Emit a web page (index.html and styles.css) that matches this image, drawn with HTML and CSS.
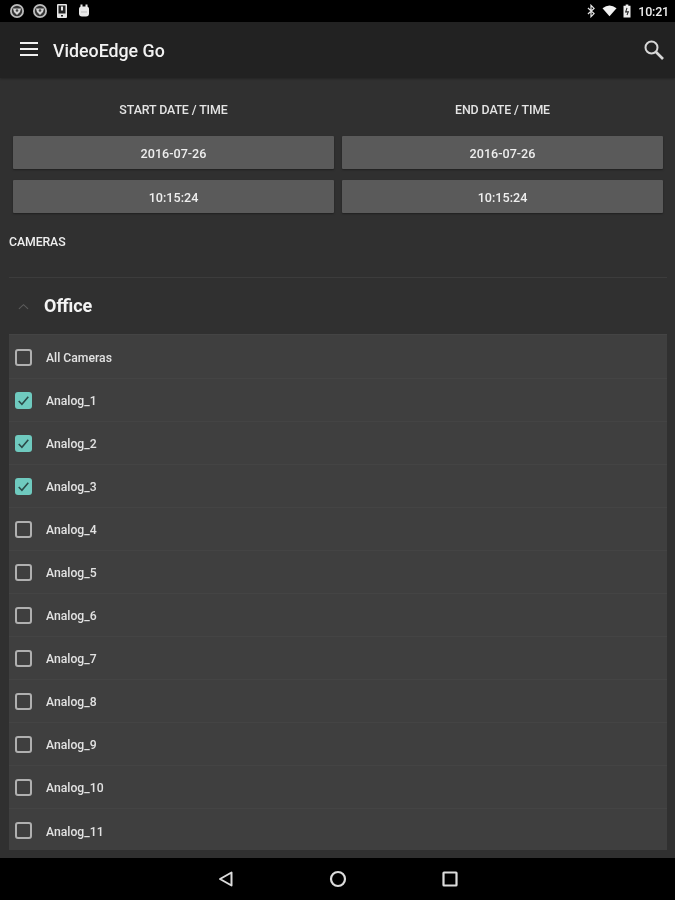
FILE: index.html
```html
<!DOCTYPE html>
<html lang="en">
<head>
<meta charset="utf-8">
<title>VideoEdge Go</title>
<link rel="stylesheet" href="styles.css">
</head>
<body>
<div class="app">
  <header class="status">
    <div class="status-group left">
      <svg class="si" viewBox="0 0 16 16"><circle cx="8" cy="8" r="7" fill="#bdbdbd"/><circle cx="8" cy="8" r="5.200" fill="#333"/><path d="M4 5.500h8l-1 3.500L8 12 5 9z" fill="#d4d4d4"/><circle cx="8" cy="7.500" r="1.300" fill="#444"/></svg>
      <svg class="si" viewBox="0 0 16 16"><circle cx="8" cy="8" r="7" fill="#bdbdbd"/><circle cx="8" cy="8" r="5.200" fill="#333"/><path d="M4 5.500h8l-1 3.500L8 12 5 9z" fill="#d4d4d4"/><circle cx="8" cy="7.500" r="1.300" fill="#444"/></svg>
      <svg class="si narrow" viewBox="0 0 12 16"><rect x="1" y="1" width="10" height="14" rx="1" fill="#e6e6e6"/><rect x="2.500" y="2.500" width="7" height="8" fill="#222"/><rect x="5" y="3.500" width="2" height="4" fill="#e6e6e6"/><rect x="5" y="12" width="2" height="1.500" fill="#222"/></svg>
      <svg class="si" viewBox="0 0 16 16"><path d="M3 6Q3 3.500 5.500 3.500h5Q13 3.500 13 6v4.500q0 3-3 3H6q-3 0-3-3z" fill="#e8e8e8"/><rect x="4.500" y="1.500" width="2" height="3" fill="#e8e8e8"/><rect x="9.500" y="1.500" width="2" height="3" fill="#e8e8e8"/><path d="M5 9h6" stroke="#bbb" stroke-width="1"/></svg>
    </div>
    <div class="status-group right">
      <svg class="si bt" viewBox="0 0 10 16"><path d="M1.500 4.500l7 6.500L5 14.500v-13L8.500 5l-7 6.500" fill="none" stroke="#e6e6e6" stroke-width="1.400"/></svg>
      <svg class="si wifi" viewBox="0 0 16 12"><path d="M0.500 3Q8-2.500 15.500 3L8 11.500z" fill="#f2f2f2"/></svg>
      <svg class="si batt" viewBox="0 0 10 16"><path d="M3.500 0.500h3v1.500H9v13.500H1V2h2.500z" fill="#eee"/><path d="M5 4.500L3.500 9h3L5 12.500" fill="none" stroke="#222" stroke-width="1.200"/></svg>
      <span class="clock">10:21</span>
    </div>
  </header>

  <nav class="toolbar">
    <div class="menu"><span></span><span></span><span></span></div>
    <h1 class="title">VideoEdge Go</h1>
    <svg class="search" viewBox="0 0 22 22"><circle cx="8.500" cy="8.500" r="6" fill="none" stroke="#d8d8d8" stroke-width="2"/><path d="M13 13l7 7" stroke="#d8d8d8" stroke-width="2.600" fill="none"/></svg>
  </nav>

  <main class="content">
    <section class="dates">
      <div class="date-col">
        <div class="date-label">START DATE / TIME</div>
        <button class="date-btn">2016-07-26</button>
        <button class="date-btn">10:15:24</button>
      </div>
      <div class="date-col">
        <div class="date-label">END DATE / TIME</div>
        <button class="date-btn">2016-07-26</button>
        <button class="date-btn">10:15:24</button>
      </div>
    </section>

    <div class="cameras-label">CAMERAS</div>

    <section class="group">
      <div class="group-head">
        <svg class="chev" viewBox="0 0 12 7"><path d="M1 6l5-4.500L11 6" fill="none" stroke="#5c5c5c" stroke-width="1.200"/></svg>
        <span class="group-name">Office</span>
      </div>
      <ul class="cam-list">
        <li class="cam"><span class="box"></span><span class="cam-name">All Cameras</span></li>
        <li class="cam"><span class="box on"><svg viewBox="0 0 16 16"><path d="M3.500 8.500l3 3 6-7" fill="none" stroke="#2c4a48" stroke-width="1.500"/></svg></span><span class="cam-name">Analog_1</span></li>
        <li class="cam"><span class="box on"><svg viewBox="0 0 16 16"><path d="M3.500 8.500l3 3 6-7" fill="none" stroke="#2c4a48" stroke-width="1.500"/></svg></span><span class="cam-name">Analog_2</span></li>
        <li class="cam"><span class="box on"><svg viewBox="0 0 16 16"><path d="M3.500 8.500l3 3 6-7" fill="none" stroke="#2c4a48" stroke-width="1.500"/></svg></span><span class="cam-name">Analog_3</span></li>
        <li class="cam"><span class="box"></span><span class="cam-name">Analog_4</span></li>
        <li class="cam"><span class="box"></span><span class="cam-name">Analog_5</span></li>
        <li class="cam"><span class="box"></span><span class="cam-name">Analog_6</span></li>
        <li class="cam"><span class="box"></span><span class="cam-name">Analog_7</span></li>
        <li class="cam"><span class="box"></span><span class="cam-name">Analog_8</span></li>
        <li class="cam"><span class="box"></span><span class="cam-name">Analog_9</span></li>
        <li class="cam"><span class="box"></span><span class="cam-name">Analog_10</span></li>
        <li class="cam"><span class="box"></span><span class="cam-name">Analog_11</span></li>
      </ul>
    </section>
  </main>

  <footer class="navbar">
    <svg class="nav-icon" viewBox="0 0 18 18"><path d="M14.500 2.500v13L3 9z" fill="none" stroke="#dcdcdc" stroke-width="2" stroke-linejoin="round"/></svg>
    <svg class="nav-icon" viewBox="0 0 18 18"><circle cx="9" cy="9" r="7" fill="none" stroke="#dcdcdc" stroke-width="2.200"/></svg>
    <svg class="nav-icon" viewBox="0 0 18 18"><rect x="2.500" y="2.500" width="13" height="13" rx="0.500" fill="none" stroke="#dcdcdc" stroke-width="2.200"/></svg>
  </footer>
</div>
</body>
</html>
```

FILE: styles.css
```css
* { box-sizing: border-box; }
html, body { margin: 0; padding: 0; }
body { background: #000; font-family: Roboto, "Liberation Sans", sans-serif; color: #eee; }
.app { width: 675px; height: 900px; display: flex; flex-direction: column; overflow: hidden; filter: blur(0.4px); }

.status { height: 22px; flex: none; background: #000; display: flex; justify-content: space-between; align-items: center; padding: 0 6px 0 9px; }
.status-group { display: flex; align-items: center; }
.status-group.left { gap: 7px; }
.status-group.right { gap: 5px; }
.si { width: 16px; height: 16px; display: block; }
.si.narrow { width: 12px; margin: 0 1px; }
.si.bt { width: 10px; height: 14px; }
.si.wifi { width: 15px; height: 12px; margin-left: 1px; }
.si.batt { width: 10px; height: 14px; }
.clock { font-size: 12.500px; font-weight: 500; color: #eee; letter-spacing: -0.200px; margin-left: 1px; }

.toolbar { height: 56px; flex: none; background: #222; display: flex; align-items: center; padding: 0 10px 0 20px; box-shadow: 0 1px 2px rgba(0,0,0,.25); position: relative; }
.menu { width: 18px; display: flex; flex-direction: column; gap: 3.500px; margin-top: -2px; }
.menu span { height: 2.500px; background: #f0f0f0; display: block; }
.title { margin: 0 0 0 15px; font-size: 17.800px; font-weight: 500; color: #f2f2f2; flex: 1; }
.search { width: 22px; height: 22px; margin-top: 0; }

.content { flex: 1; min-height: 0; background: #303030; display: flex; flex-direction: column; padding: 0 8px 8px 9px; overflow: hidden; }

.dates { display: grid; grid-template-columns: 321px 321px; gap: 8px; padding-left: 4px; }
.date-col { display: flex; flex-direction: column; gap: 11px; }
.date-label { height: 47px; padding-top: 24px; text-align: center; font-size: 12.400px; font-weight: 500; line-height: 16px; letter-spacing: -0.100px; color: #e4e4e4; }
.date-btn { height: 33px; border: 0; border-radius: 1px; background: #5a5a5a; color: #eee; font: 500 12.600px/35px Roboto, "Liberation Sans", sans-serif; text-align: center; padding: 0; box-shadow: 0 1px 2px rgba(0,0,0,.35); }

.cameras-label { margin-top: 21px; height: 15px; font-size: 12.300px; font-weight: 500; line-height: 16px; letter-spacing: -0.100px; color: #eee; }

.group { margin-top: 28px; border-top: 1px solid #3c3c3c; display: flex; flex-direction: column; flex: 1; min-height: 0; }
.group-head { height: 57px; flex: none; display: flex; align-items: center; }
.chev { width: 11px; height: 7px; margin-left: 9px; }
.group-name { margin-left: 15px; margin-bottom: 2px; font-size: 18px; font-weight: 700; color: #f4f4f4; }

.cam-list { list-style: none; margin: 0; padding: 1px 0 0; background: #3f3f3f; height: 515px; overflow: hidden; box-shadow: 0 -1px 0 #444; }
.cam { height: 43px; display: flex; align-items: center; font-size: 12.200px; font-weight: 500; color: #e2e2e2; border-bottom: 1px solid #444; padding-left: 6px; }
.cam:last-child { border-bottom: 0; }
.cam-name { margin-top: 2px; }
.box { width: 17px; height: 17px; border: 2px solid #b0b0b0; border-radius: 3px; margin-right: 14px; flex: none; display: block; }
.box.on { background: #6fcabf; border: 0; }
.box svg { width: 17px; height: 17px; display: block; }

.navbar { height: 42px; flex: none; background: #000; display: flex; align-items: center; justify-content: center; gap: 94px; }
.nav-icon { width: 18px; height: 18px; display: block; }
```
